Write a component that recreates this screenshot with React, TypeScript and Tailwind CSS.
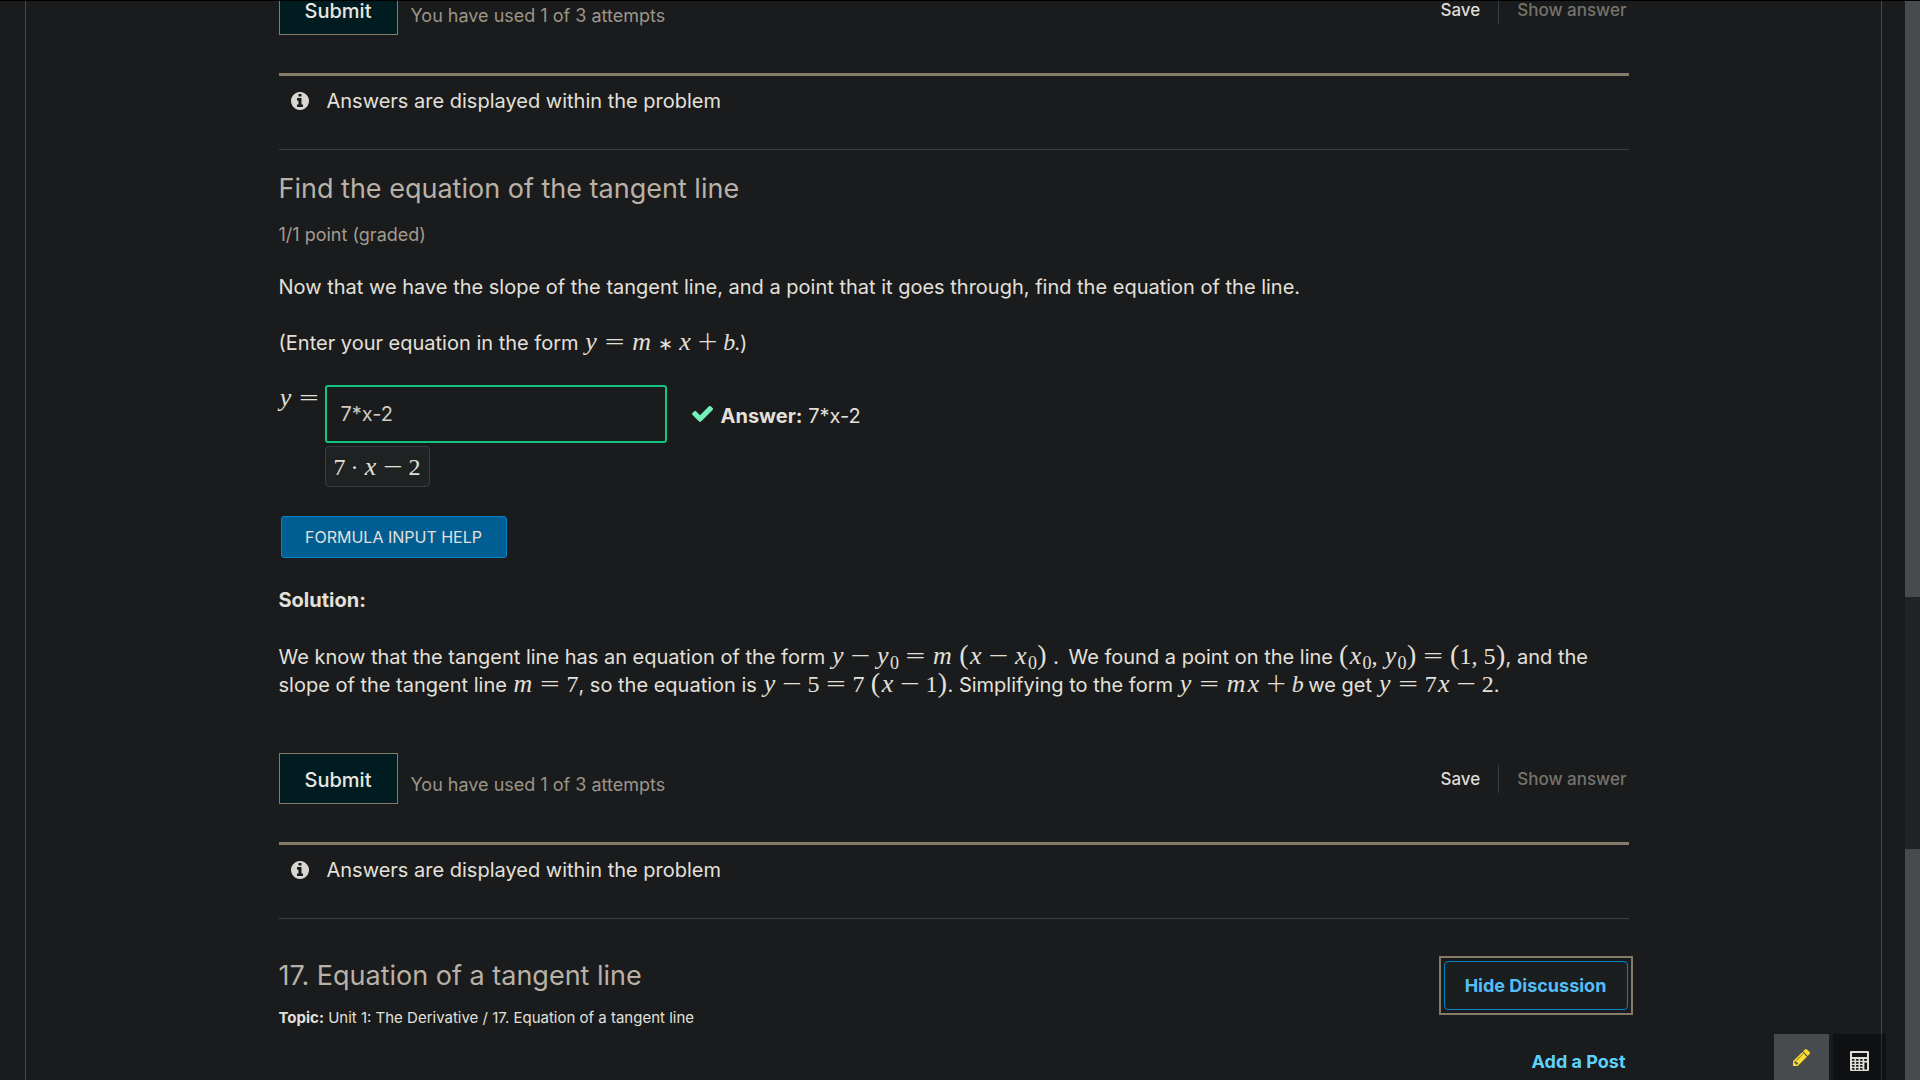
import type { ReactNode } from "react";

function M({ children }: { children: ReactNode }) {
  return (
    <span className="inline-block font-['Liberation_Serif',serif] text-2xl leading-5 whitespace-nowrap">
      {children}
    </span>
  );
}

function V({ children }: { children: ReactNode }) {
  return <i className="inline-block w-[14px] text-center text-[26px] leading-5">{children}</i>;
}

function Narrow({ children }: { children: ReactNode }) {
  return <i className="inline-block w-[11px] text-center text-2xl leading-5">{children}</i>;
}

function Wide({ children }: { children: ReactNode }) {
  return <i className="inline-block w-[21px] text-center text-[26px] leading-5">{children}</i>;
}

function Rel() {
  return (
    <span className="inline-block w-[33px] text-center font-['DejaVu_Sans',sans-serif] text-[26px] leading-4 font-extralight">
      =
    </span>
  );
}

function Bin({ children }: { children: ReactNode }) {
  return (
    <span className="inline-block w-[31px] text-center font-['DejaVu_Sans',sans-serif] text-[26px] leading-4 font-extralight">
      {children}
    </span>
  );
}

function P({ children }: { children: ReactNode }) {
  return <span className="inline-block w-[10px] text-center text-[28px] leading-5">{children}</span>;
}

function Zero() {
  return <sub className="text-lg leading-0">0</sub>;
}

function InfoIcon() {
  return (
    <svg viewBox="0 128 1536 1536" className="size-[18px] shrink-0" fill="#dad7d1" aria-hidden="true">
      <path d="M1024 1376v-160q0-14-9-23t-23-9h-96v-512q0-14-9-23t-23-9h-320q-14 0-23 9t-9 23v160q0 14 9 23t23 9h96v320h-96q-14 0-23 9t-9 23v160q0 14 9 23t23 9h448q14 0 23-9t9-23zm-128-896v-160q0-14-9-23t-23-9h-192q-14 0-23 9t-9 23v160q0 14 9 23t23 9h192q14 0 23-9t9-23zm640 416q0 209-103 385.5t-279.5 279.5-385.5 103-385.5-103-279.5-279.5-103-385.5 103-385.5 279.5-279.5 385.5-103 385.5 103 279.5 279.5 103 385.5z" />
    </svg>
  );
}

function CheckIcon() {
  return (
    <svg viewBox="121 344 1550 1178" className="ml-[25px] h-4 w-[21px] shrink-0" fill="#72f0b8" aria-hidden="true">
      <path d="M1671 566q0 40-28 68l-724 724-136 136q-28 28-68 28t-68-28l-136-136-362-362q-28-28-28-68t28-68l136-136q28-28 68-28t68 28l294 295 656-657q28-28 68-28t68 28l136 136q28 28 28 68z" />
    </svg>
  );
}

function PencilIcon() {
  return (
    <svg viewBox="0 149 1515 1515" className="size-[17px]" fill="#fbdc2e" aria-hidden="true">
      <path d="M363 1536l91-91-235-235-91 91v107h128v128h107zm523-928q0-22-22-22-10 0-17 7l-542 542q-7 7-7 17 0 22 22 22 10 0 17-7l542-542q7-7 7-17zm-54-192l416 416-832 832h-416v-416zm683 96q0 53-37 90l-166 166-416-416 166-165q36-38 90-38 53 0 91 38l235 234q37 39 37 91z" />
    </svg>
  );
}

function CalculatorIcon() {
  return (
    <svg viewBox="0 0 19 20" className="h-5 w-[19px]" aria-hidden="true">
      <rect width="19" height="20" rx="1" fill="#e0ddd8" />
      <rect x="2" y="2" width="15" height="4" fill="#111314" />
      {[8, 11, 14, 17].map((y) =>
        [2, 6, 10].map((x) => <rect key={`${x}-${y}`} x={x} y={y} width="2.6" height="1.8" rx="0.6" fill="#111314" />),
      )}
      <rect x="14" y="8" width="3" height="1.8" rx="0.6" fill="#111314" />
      <rect x="14.4" y="11.5" width="2.6" height="7" rx="0.6" fill="#111314" />
    </svg>
  );
}

function SubmitRow() {
  return (
    <div className="flex items-start justify-between">
      <div className="flex items-center gap-[13px]">
        <button className="h-[51px] w-[119px] border border-[#857b6b] bg-[#001c20] pt-0.5 text-xl font-medium text-[#e8e6e3]">
          Submit
        </button>
        <span className="pt-3 text-lg leading-6 text-[#9c9589]">You have used 1 of 3 attempts</span>
      </div>
      <div className="flex items-center pt-3 text-[17px] leading-7 font-medium">
        <button className="pr-[18px] text-[#dedbd6]">Save</button>
        <button className="border-l border-[#3b3e40] pr-0.5 pl-[18px] text-[#76736d]" disabled>
          Show answer
        </button>
      </div>
    </div>
  );
}

function AnswerNotice() {
  return (
    <div className="mt-[38px] flex items-center gap-[18px] border-t-[3px] border-[#857b6b] pt-[11px] pb-[34px] pl-3">
      <InfoIcon />
      <p className="leading-7">Answers are displayed within the problem</p>
    </div>
  );
}

export default function App() {
  return (
    <div className="relative flex h-screen overflow-hidden border-t border-black bg-[#1a1b1c] font-['Inter',sans-serif] text-xl text-[#e3e0db]">
      <main className="mr-[23px] ml-[25px] min-w-0 flex-1 border-x border-[#45484a]">
        <div className="mx-auto -mt-[17px] max-w-[1350px]">
          <SubmitRow />
          <AnswerNotice />

          <section className="border-t border-[#3b3e40] pt-[21px]">
            <h3 className="text-[27px] leading-9 text-[#b9b1a6]">Find the equation of the tangent line</h3>
            <p className="mt-4 text-lg leading-6 text-[#a39b8f]">1/1 point (graded)</p>

            <p className="mt-[26px] leading-7">
              Now that we have the slope of the tangent line, and a point that it goes through, find the equation of the
              line.
            </p>
            <p className="mt-7 leading-7">
              (Enter your equation in the form{" "}
              <M>
                <V>y</V>
                <Rel />
                <Wide>m</Wide>
                <span className="inline-block w-[26px] text-center text-lg leading-4">∗</span>
                <V>x</V>
                <Bin>+</Bin>
                <Narrow>b</Narrow>
              </M>
              .)
            </p>

            <div className="mt-[28px] flex items-start">
              <label htmlFor="formula" className="w-[46px] leading-7 whitespace-nowrap">
                <M>
                  <V>y</V>
                  <Rel />
                </M>
              </label>
              <div>
                <div className="flex items-center">
                  <input
                    id="formula"
                    defaultValue="7*x-2"
                    className="h-[58px] w-[342px] rounded-[3px] border-2 border-[#12c47c] bg-transparent px-3.5 text-xl text-[#cfcbc4] outline-none"
                  />
                  <CheckIcon />
                  <p className="ml-2 pt-1 leading-7">
                    <b className="font-bold">Answer:</b> 7*x-2
                  </p>
                </div>
                <div className="mt-[3px] flex h-[41px] w-[105px] items-center justify-center rounded border border-[#393d3f] bg-[#1f2223]">
                  <M>
                    7<span className="inline-block w-[18px] text-center">·</span>
                    <V>x</V>
                    <Bin>−</Bin>2
                  </M>
                </div>
              </div>
            </div>

            <button className="mt-[29px] ml-0.5 h-[42px] w-[226px] rounded-[3px] border border-[#0583c9] bg-[#005e93] text-base text-[#e3e0db]">
              FORMULA INPUT HELP
            </button>

            <p className="mt-7 leading-7 font-bold">Solution:</p>
            <p className="mt-[29px] leading-7">
              We know that the tangent line has an equation of the form{" "}
              <M>
                <V>y</V>
                <Bin>−</Bin>
                <V>y</V>
                <Zero />
                <Rel />
                <Wide>m</Wide> <P>(</P>
                <V>x</V>
                <Bin>−</Bin>
                <V>x</V>
                <Zero />
                <P>)</P> <span className="mr-1">.</span>
              </M>{" "}
              We found a point on the line{" "}
              <M>
                <P>(</P>
                <V>x</V>
                <Zero />, <V>y</V>
                <Zero />
                <P>)</P>
                <Rel />
                <P>(</P>1, 5<P>)</P>
              </M>
              , and the slope of the tangent line{" "}
              <M>
                <Wide>m</Wide>
                <Rel />7
              </M>
              , so the equation is{" "}
              <M>
                <V>y</V>
                <Bin>−</Bin>5<Rel />7 <P>(</P>
                <V>x</V>
                <Bin>−</Bin>1<P>)</P>
              </M>
              . Simplifying to the form{" "}
              <M>
                <V>y</V>
                <Rel />
                <Wide>m</Wide>
                <V>x</V>
                <Bin>+</Bin>
                <Narrow>b</Narrow>
              </M>{" "}
              we get{" "}
              <M>
                <V>y</V>
                <Rel />7<V>x</V>
                <Bin>−</Bin>2
              </M>
              .
            </p>
          </section>

          <div className="mt-[54px]">
            <SubmitRow />
          </div>
          <AnswerNotice />

          <section className="flex items-start justify-between border-t border-[#3b3e40] pt-[37px]">
            <div>
              <h2 className="mt-0.5 text-[27px] leading-9 text-[#b9b1a6]">17. Equation of a tangent line</h2>
              <p className="mt-3 text-[15px] leading-6">
                <b className="font-bold">Topic:</b> Unit 1: The Derivative / 17. Equation of a tangent line
              </p>
            </div>
            <div className="flex flex-col items-end">
              <div className="-mr-1 border-2 border-[#857b6b] p-[3px]">
                <button className="block h-[49px] w-[184px] rounded-[4px] border border-[#0583c9] bg-[#1a1e1f] text-lg font-bold text-[#55bdf8]">
                  Hide Discussion
                </button>
              </div>
              <a href="#post" className="mt-[33px] pr-[3px] text-lg leading-7 font-bold text-[#5dd3fb]">
                Add a Post
              </a>
            </div>
          </section>
        </div>
      </main>

      <div className="flex w-[15px] flex-col bg-[#1f2324]">
        <div className="h-[596px] bg-[#474b4e]" />
        <div className="mt-[252px] flex-1 bg-[#474b4e]" />
      </div>

      <div className="absolute right-[34px] bottom-0 flex h-[46px] gap-1">
        <button aria-label="Highlight" className="flex w-[55px] items-center justify-center bg-[#474b4e]">
          <PencilIcon />
        </button>
        <button aria-label="Calculator" className="flex w-[53px] items-center justify-center bg-black/35 pt-2">
          <CalculatorIcon />
        </button>
      </div>
    </div>
  );
}
